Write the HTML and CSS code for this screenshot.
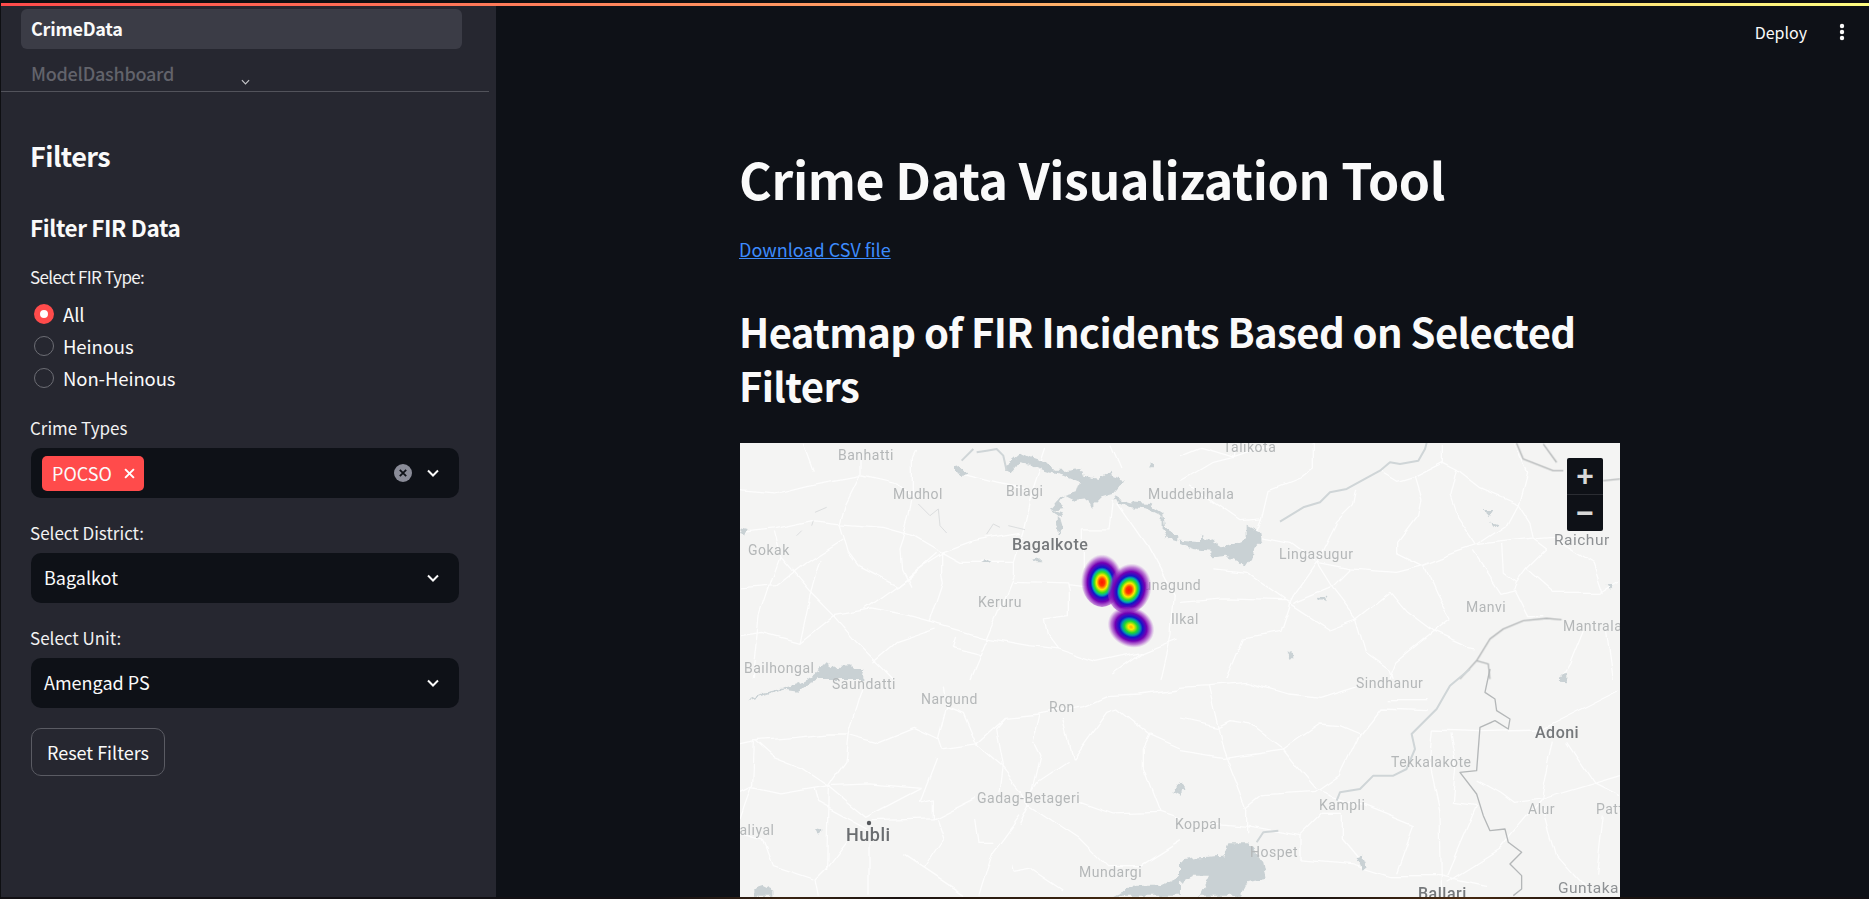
FILE: index.html
```html
<!DOCTYPE html>
<html lang="en">
<head>
<meta charset="utf-8">
<title>Crime Data Visualization Tool</title>
<link rel="stylesheet" href="styles.css">
</head>
<body>
<div class="frame">
  <div class="topbar"></div>
  <div class="app">
    <aside class="sidebar">
      <nav class="nav">
        <a class="nav-item active">CrimeData</a>
        <a class="nav-item faded">ModelDashboard</a>
        <svg class="nav-more" viewBox="0 0 10 6"><path d="M1 1l4 4 4-4"/></svg>
      </nav>
      <div class="side-body">
        <h2 class="side-title">Filters</h2>
        <h3 class="side-sub">Filter FIR Data</h3>
        <div class="field-label radio-label">Select FIR Type:</div>
        <div class="radios">
          <div class="radio on"><span class="dot"></span>All</div>
          <div class="radio"><span class="dot"></span>Heinous</div>
          <div class="radio"><span class="dot"></span>Non-Heinous</div>
        </div>
        <div class="field-label">Crime Types</div>
        <div class="select">
          <span class="tag">POCSO<svg class="tag-x" viewBox="0 0 10 10"><path d="M1 1l8 8M9 1l-8 8"/></svg></span>
          <svg class="clear" viewBox="0 0 18 18"><circle cx="9" cy="9" r="9"/><path d="M5.8 5.8l6.4 6.4M12.2 5.8l-6.4 6.4"/></svg>
          <svg class="chev" viewBox="0 0 12 8"><path d="M1 1.500l5 5 5-5"/></svg>
        </div>
        <div class="field-label">Select District:</div>
        <div class="select"><span class="value">Bagalkot</span><svg class="chev" viewBox="0 0 12 8"><path d="M1 1.500l5 5 5-5"/></svg></div>
        <div class="field-label">Select Unit:</div>
        <div class="select"><span class="value">Amengad PS</span><svg class="chev" viewBox="0 0 12 8"><path d="M1 1.500l5 5 5-5"/></svg></div>
        <button class="reset">Reset Filters</button>
      </div>
    </aside>
    <main class="main">
      <header class="header">
        <span class="deploy">Deploy</span>
        <svg class="kebab" viewBox="0 0 6 18"><circle cx="3" cy="3" r="2.200"/><circle cx="3" cy="9" r="2.200"/><circle cx="3" cy="15" r="2.200"/></svg>
      </header>
      <div class="content">
        <h1 class="title">Crime Data Visualization Tool</h1>
        <a class="link">Download CSV file</a>
        <h2 class="heading">Heatmap of FIR Incidents Based on Selected Filters</h2>
        <div class="map">
          <svg class="map-svg" viewBox="740 444 880 455" preserveAspectRatio="none">
            <defs>
              <filter id="soft" x="-5%" y="-5%" width="110%" height="110%"><feGaussianBlur stdDeviation="1.800"/></filter>
              <filter id="wobble" filterUnits="userSpaceOnUse" x="740" y="444" width="880" height="455">
                <feTurbulence type="fractalNoise" baseFrequency=".028" numOctaves="2" seed="4"/>
                <feDisplacementMap in="SourceGraphic" scale="9" xChannelSelector="R" yChannelSelector="G"/>
              </filter>
              <filter id="jag" filterUnits="userSpaceOnUse" x="740" y="444" width="880" height="455">
                <feTurbulence type="fractalNoise" baseFrequency=".14" numOctaves="2" seed="7"/>
                <feDisplacementMap in="SourceGraphic" scale="7" xChannelSelector="R" yChannelSelector="G"/>
              </filter>
              <radialGradient id="hotA" cx=".5" cy=".56" r=".5">
                <stop offset="0" stop-color="#ff1500"/><stop offset=".13" stop-color="#ff3a00"/><stop offset=".26" stop-color="#ffe800"/><stop offset=".37" stop-color="#36e020"/><stop offset=".46" stop-color="#00a8b0"/><stop offset=".54" stop-color="#1414c8"/><stop offset=".7" stop-color="#7400b4"/><stop offset=".86" stop-color="#9a30c0" stop-opacity=".6"/><stop offset="1" stop-color="#b060d0" stop-opacity="0"/>
              </radialGradient>
              <radialGradient id="hotB" cx=".5" cy=".5" r=".5">
                <stop offset="0" stop-color="#ffb000"/><stop offset=".12" stop-color="#ffe800"/><stop offset=".28" stop-color="#20d830"/><stop offset=".4" stop-color="#0090b0"/><stop offset=".5" stop-color="#1414c8"/><stop offset=".68" stop-color="#7400b4"/><stop offset=".85" stop-color="#9a30c0" stop-opacity=".6"/><stop offset="1" stop-color="#b060d0" stop-opacity="0"/>
              </radialGradient>
            </defs>
            <g filter="url(#wobble)">
            <g class="roads" transform="translate(730,430) scale(.3333)">
              <path d="M30 185L130 195 230 170 390 140 500 165 550 205M390 70L390 140 345 230 330 285 355 370 385 410"/>
              <path d="M30 310L130 300 250 275 330 285 460 295 550 320 635 370M550 80L550 205 540 260 520 330 510 360 515 420 540 470"/>
              <path d="M635 370L635 430 640 460 600 580M635 370L730 335 780 325 870 310M635 370L690 400 850 400 880 300 900 210 950 60M850 400L850 440 800 560 720 750"/>
              <path d="M30 480L140 470 230 400 340 330M150 385L240 490 310 560 380 640 440 700 490 750M130 310L150 385 130 440 90 560 70 750"/>
              <path d="M310 560L420 540 530 560 640 590 760 625 900 650 980 660 1100 700 1240 670 1340 630M30 620L100 610 210 640 310 560M385 410L500 470 560 420 640 370M210 640L240 500 270 390"/>
              <path d="M850 460L1010 465 1015 490 1015 560 940 570 950 620 980 660M1010 470L1130 485M1140 50L1170 120M1150 210L1140 300 1060 300 1060 420M1160 220L1250 350 1330 500 1320 620 1290 750"/>
              <path d="M680 630L670 660 750 680M220 45L250 125M700 140L820 170 900 185M1240 670L1150 735M430 700L500 640 620 600M560 60L550 80M620 370L540 440 400 540"/>
            </g>
            <g class="roads" transform="translate(1180,430) scale(.3333)">
              <path d="M0 160L100 100 160 85 165 45M160 85L60 55 0 80M160 85L265 50M400 42L400 120 360 150 270 185 250 270 180 275 100 220 30 170"/>
              <path d="M250 270L230 320 330 340 410 400 510 420 650 430 730 410 830 370 890 350 1060 330 1120 325M530 180L520 230 470 280 410 400 340 500 330 520 300 610 190 630 140 750"/>
              <path d="M410 400L460 480 530 570 560 670 630 720 640 750M0 520L130 510 320 515 450 600 530 570 630 490 680 550 760 610 860 655 890 660M510 420L460 470 340 520M100 420L200 430 320 515"/>
              <path d="M790 42L790 100 830 120 900 175 1015 225 1040 130 1000 42M790 100L700 145 650 160 600 130M700 145L720 210 710 260 650 340 650 370 730 410M830 120L810 200 830 260 890 350M1015 225L980 290 890 350"/>
              <path d="M1015 225L1050 280 1060 330 1100 360 1040 420 1010 460 1000 480 960 490 880 370M965 350L970 430 1010 460M1040 420L1120 490 1260 490 1320 450M730 410L770 500 810 570 760 610 650 700 630 750M1000 480L1040 560 1090 560M1210 600L1170 700 1140 750M1280 610L1300 750M1130 330L1240 400 1270 490"/>
            </g>
            <g class="roads" transform="translate(730,670) scale(.3333)">
              <path d="M30 225L75 215 200 205 290 195 350 195 440 220 550 175 625 210 635 240 740 225 830 145 930 135 1060 110 1130 80 1230 75 1350 60M75 215L130 265 220 300 295 350"/>
              <path d="M30 370L60 355 150 375 295 350 420 345 575 358M295 350L345 280 355 190 395 60M295 350L290 600M295 350L410 445 575 358M250 360L260 400 410 480"/>
              <path d="M425 455L610 450 740 385M420 520L420 680M350 515L285 600 255 630 265 680M625 210L650 110 640 50M740 225L700 130 650 110M740 225L820 295 880 370 900 410 870 470M830 145L800 180 820 290 810 370"/>
              <path d="M1010 280L920 340 900 370M930 135L910 220 930 260 905 365M1000 150L1030 270 1130 130 1160 120 1260 200 1350 240M1260 200L1240 240 1240 300 1290 430 1350 450M900 410L1050 510 1130 590 1230 590 1350 515M870 440L790 550 750 680"/>
              <path d="M1050 400L1150 435 1290 430M570 400L620 270M610 450L610 390 570 400M740 450L750 520 790 520M520 560L580 600 640 510 620 450M520 560L700 680M845 590L850 610 910 600 1000 660M250 630L130 590 100 510 30 490M70 215L65 350 30 450"/>
            </g>
            <g class="roads" transform="translate(1180,670) scale(.3333)">
              <path d="M0 55L85 50 200 40 320 75 420 85 530 50M85 50L130 240 200 420 200 490M0 150L110 175 150 155 210 165 310 240 420 165 480 170 540 195 600 120 740 125"/>
              <path d="M0 245L130 265 310 240 350 290 410 360 550 410 700 470 650 610M620 95L740 95M760 180L900 185 1080 180 1320 60M540 195L480 320 410 370 250 380 200 420"/>
              <path d="M200 470L360 500 430 430 490 430 490 510 540 570M360 570L520 585 630 620 780 620 920 650M760 180L750 290 780 430 785 680M810 190L830 300 820 400 890 410 800 620M1120 215L1085 390 1000 490 960 540 800 640"/>
              <path d="M1085 390L1320 320M1160 220L1240 340 1320 380M1090 420L1130 560 1210 650M890 330L960 370 1000 400 1085 390M1270 440L1250 620M210 470L100 460M360 500L360 570"/>
            </g>
            </g>
            <g filter="url(#jag)">
            <g class="water" transform="translate(730,430) scale(.3333)">
              <path d="M675 112L690 108 700 125 710 135 690 138 675 130ZM825 125L840 95 870 70 900 85 945 100 955 105 975 125 1020 125 1050 118 1060 140 1105 150 1120 140 1145 125 1150 145 1185 155 1150 195 1115 205 1085 235 1075 210 1035 215 1005 200 985 220 1000 240 965 245 990 265 1000 300 985 315 975 280 1000 255 960 240 990 205 1040 190 1050 160 1000 140 960 130 945 125 900 105 870 100 845 130Z"/>
              <path d="M1150 205L1200 220 1260 225 1300 250 1305 295 1345 325 1345 335 1310 325 1295 300 1295 260 1250 238 1200 235 1155 212ZM1262 100H1275V118H1262ZM758 395L770 388 785 398ZM908 392L925 388 938 400 920 400ZM30 298L50 303 42 320 35 310Z"/>
              <path d="M230 750L270 720 290 700 310 715 360 712 400 745 400 750Z"/>
            </g>
            <g class="water" transform="translate(1180,430) scale(.3333)">
              <path d="M0 335L60 340 60 320 100 335 130 355 165 345 200 330 200 290 240 310 245 335 220 360 215 385 195 415 175 395 140 380 100 385 90 365 40 360 0 345Z"/>
              <path d="M915 240H940L925 265ZM930 280L955 290 945 298ZM412 505L435 500 440 520ZM325 670L345 680 335 690ZM1280 465H1300L1290 480ZM1135 742H1165V750H1135Z"/>
            </g>
            <g class="water" transform="translate(730,670) scale(.3333)">
              <path d="M50 95L100 72 160 58 210 42 290 0 400 0 395 30 300 14 260 32 205 68 160 62 100 82ZM70 660L100 650 130 665 130 680H70ZM1150 680L1220 650 1290 650 1350 620V680ZM1350 335L1330 370 1350 380ZM255 480L275 485 265 500Z"/>
            </g>
            <g class="water" transform="translate(1180,670) scale(.3333)">
              <path d="M0 575L60 565 130 560 145 520 205 520 250 580 260 630 200 640 180 680 60 680 90 620 40 620 0 640ZM0 340L20 355 0 372ZM530 565L545 560 560 595 548 605ZM1140 20L1165 18 1160 40 1140 38Z"/>
            </g>
            </g>
            <g class="river" transform="translate(730,430) scale(.3333)">
              <path d="M695 95L730 60M740 70L770 65 800 60 820 80 830 125"/>
              <path class="thin" d="M565 225L600 260 625 240 630 290 650 312M770 315L790 285 810 295M835 290L885 302M200 320L215 305M245 290L250 275M255 250L290 235"/>
            </g>
            <g class="river" transform="translate(1180,430) scale(.3333)">
              <path d="M300 278L370 235 420 220 450 190 500 180 600 125 630 100 660 105 715 95 735 60 740 42"/>
            </g>
            <g class="border" transform="translate(1180,430) scale(.3333)">
              <path d="M1010 42L1030 90 1120 125 1150 125M1090 45L1130 100M1270 155L1320 150M1145 572L1100 568 1030 575 970 600 930 630 890 695 840 750M890 695L925 705 930 750"/>
            </g>
            <g class="river" transform="translate(1180,670) scale(.3333)">
              <path d="M870 0L810 50 770 120 695 195 705 240 680 300 640 320 580 320 540 360 480 370 470 395M230 520L250 490 295 485"/>
            </g>
            <g class="border" transform="translate(1180,670) scale(.3333)">
              <path d="M930 0L915 70 945 90 950 125 990 150 985 180 945 155 900 175 890 305 840 310 890 375 910 440 930 485 975 480 985 520 1025 550 990 585 1025 620 1025 660 1000 680"/>
            </g>

            <text class="lbl" x="838" y="461">Banhatti</text>
            <text class="lbl" x="893" y="500">Mudhol</text>
            <text class="lbl" x="1006" y="497">Bilagi</text>
            <text class="lbl" x="1148" y="500">Muddebihala</text>
            <text class="lbl" x="748" y="556">Gokak</text>
            <text class="lbl strong" x="1012" y="551">Bagalkote</text>
            <text class="lbl" x="978" y="608">Keruru</text>
            <text class="lbl" x="744" y="674">Bailhongal</text>
            <text class="lbl" x="1223" y="453">Talikota</text>
            <text class="lbl" x="1279" y="560">Lingasugur</text>
            <text class="lbl city" x="1554" y="546">Raichur</text>
            <text class="lbl" x="1466" y="613">Manvi</text>
            <text class="lbl" x="1563" y="632">Mantralayam</text>
            <text class="lbl" x="1171" y="625">Ilkal</text>
            <text class="lbl" x="1133" y="591">Hunagund</text>
            <text class="lbl" x="832" y="690">Saundatti</text>
            <text class="lbl" x="921" y="705">Nargund</text>
            <text class="lbl" x="1049" y="713">Ron</text>
            <text class="lbl" x="977" y="804">Gadag-Betageri</text>
            <circle class="pin" cx="869" cy="824" r="2.200"/>
            <text class="lbl big" x="846" y="842">Hubli</text>
            <text class="lbl" x="729" y="836">Haliyal</text>
            <text class="lbl" x="1079" y="878">Mundargi</text>
            <text class="lbl" x="1175" y="830">Koppal</text>
            <text class="lbl" x="1250" y="858">Hospet</text>
            <text class="lbl" x="1319" y="811">Kampli</text>
            <text class="lbl" x="1356" y="689">Sindhanur</text>
            <text class="lbl" x="1391" y="768">Tekkalakote</text>
            <text class="lbl strong" x="1535" y="739">Adoni</text>
            <text class="lbl" x="1528" y="815">Alur</text>
            <text class="lbl" x="1596" y="815">Pattikonda</text>
            <text class="lbl city" x="1558" y="894">Guntakal</text>
            <text class="lbl strong" x="1418" y="900">Ballari</text>

            <ellipse cx="1102" cy="580" rx="21" ry="28" fill="url(#hotA)"/>
            <ellipse cx="1130" cy="588" rx="22" ry="27" fill="url(#hotA)" transform="rotate(20 1130 588)"/>
            <ellipse cx="1131" cy="628" rx="24" ry="20" fill="url(#hotB)" transform="rotate(25 1131 628)"/>
          </svg>
          <div class="zoom">
            <span class="zbtn">+</span>
            <span class="zbtn minus">−</span>
          </div>
        </div>
      </div>
    </main>
  </div>
  <div class="bottomedge"></div>
</div>
</body>
</html>
```

FILE: styles.css
```css
* { box-sizing: border-box; }
html, body { margin: 0; height: 100%; overflow: hidden; }
body {
  font-family: "Noto Sans CJK SC", "Noto Sans", sans-serif;
  color: #fafafa;
  background: #0e0f12;
}
.frame {
  height: 899px;
  display: flex;
  flex-direction: column;
  padding: 3px 0 0 1px;
}
.topbar {
  height: 3px;
  flex: none;
  background: linear-gradient(90deg, #ff4b4b, #fffd80);
}
.app {
  flex: 1;
  min-height: 0;
  display: flex;
}
.bottomedge {
  height: 2px;
  flex: none;
  background: linear-gradient(90deg, #121014 0, #121014 35%, #3a2412 42%, #1a1310 48%, #43280f 60%, #1a1310 70%, #4a2a10 78%, #1a1310 86%, #121014 100%);
}

/* Sidebar */
.sidebar {
  width: 495px;
  flex: none;
  background: #262730;
  display: flex;
  flex-direction: column;
}
.nav {
  position: relative;
  height: 86px;
  flex: none;
  margin-right: 7px;
  padding: 3px 27px 0 20px;
  border-bottom: 1px solid #52535b;
  overflow: hidden;
}
.nav-item {
  display: block;
  height: 40px;
  padding-left: 10px;
  font-size: 18px;
  line-height: 38px;
  font-weight: 600;
  letter-spacing: -.25px;
  border-radius: 6px;
}
.nav-item.active { background: #3b3c46; }
.nav-item.faded {
  margin-top: 5px;
  font-weight: 500;
  color: #62636b;
}
.nav-more {
  position: absolute;
  left: 240px;
  top: 73px;
  width: 9px;
  height: 6px;
  fill: none;
  stroke: #c6c7ca;
  stroke-width: 1.300;
}
.side-body {
  padding: 0 37px 0 30px;
}
.side-title {
  margin: 44px 0 0 -1px;
  font-size: 27px;
  line-height: 40px;
  font-weight: 600;
  letter-spacing: -.55px;
}
.side-sub {
  margin: 35px 0 0 -1px;
  font-size: 22.500px;
  line-height: 32px;
  font-weight: 600;
  letter-spacing: -.4px;
}
.field-label {
  font-size: 17px;
  line-height: 22px;
  margin: 24px 0 0 -1px;
  height: 22px;
  color: #f2f2f2;
}
.radio-label {
  margin-top: 23px;
  letter-spacing: -.65px;
}
.radios {
  margin-top: 10px;
  margin-bottom: -1px;
}
.radio {
  display: flex;
  align-items: center;
  height: 32px;
  padding-left: 3px;
  gap: 9px;
  font-size: 18.500px;
  letter-spacing: -.1px;
}
.dot {
  width: 20px;
  height: 20px;
  border-radius: 50%;
  border: 1.500px solid #6c6d74;
  background: transparent;
  flex: none;
}
.radio.on .dot {
  border: 6px solid #ff4b4b;
  background: #fff;
}
.select {
  display: flex;
  align-items: center;
  height: 50px;
  margin-top: 9px;
  padding: 0 20px 0 11px;
  background: #0e1117;
  border-radius: 10px;
  font-size: 18px;
}
.value {
  flex: 1;
  padding: 0 0 2px 2px;
}
.tag {
  display: flex;
  align-items: center;
  height: 35px;
  width: 102px;
  padding-left: 10px;
  background: #ff4b4b;
  border-radius: 5px;
  font-size: 18px;
}
.tag-x {
  width: 11px;
  height: 11px;
  margin-left: 12px;
  fill: none;
  stroke: #fff;
  stroke-width: 1.800;
}
.clear {
  width: 18px;
  height: 18px;
  margin-left: auto;
}
.clear circle { fill: #8a8c98; }
.clear path { stroke: #0e1117; stroke-width: 1.800; }
.clear + .chev { margin-left: 15px; }
.chev {
  width: 12px;
  height: 8px;
  fill: none;
  stroke: #fafafa;
  stroke-width: 2;
}
.reset {
  display: block;
  width: 134px;
  height: 48px;
  margin-top: 20px;
  padding: 0;
  background: transparent;
  border: 1px solid #5a5b63;
  border-radius: 10px;
  color: #fafafa;
  font: inherit;
  font-size: 18px;
}

/* Main */
.main {
  flex: 1;
  min-width: 0;
  background: #0e1117;
  position: relative;
  overflow: hidden;
}
.header {
  position: absolute;
  top: 0;
  right: 0;
  display: flex;
  align-items: center;
  height: 52px;
  padding-right: 24px;
}
.deploy {
  font-size: 16px;
  line-height: 48px;
}
.kebab {
  width: 6px;
  height: 18px;
  margin-left: 32px;
  fill: #fafafa;
}
.content {
  width: 880px;
  margin-left: 244px;
  display: flex;
  flex-direction: column;
  height: 100%;
}
.title {
  margin: 142px 0 0 -1px;
  font-size: 50px;
  line-height: 60px;
  font-weight: 700;
  letter-spacing: -.35px;
  flex: none;
}
.link {
  flex: none;
  margin: 27px 0 0 -1px;
  font-size: 18px;
  line-height: 28px;
  color: #3d8bfd;
  text-decoration: underline;
  align-self: flex-start;
}
.heading {
  flex: none;
  margin: 41px 0 0 -1px;
  font-size: 40px;
  line-height: 54px;
  font-weight: 600;
  letter-spacing: -.6px;
}
.map {
  position: relative;
  flex: 1;
  min-height: 0;
  margin-top: 31px;
  background: #f4f4f3;
  overflow: hidden;
}
.map-svg {
  display: block;
  width: 880px;
  height: 455px;
}
.roads path {
  fill: none;
  stroke: #fdfdfd;
  stroke-width: 3.800;
  stroke-linejoin: round;
}
.water path { fill: #c9d1d4; stroke: none; }
.river path {
  fill: none;
  stroke: #cfd5d7;
  stroke-width: 6;
  stroke-linejoin: round;
}
.river path.thin { stroke-width: 2.500; stroke: #d6d9da; }
.border path {
  fill: none;
  stroke: #b4b7b8;
  stroke-width: 4;
  stroke-linejoin: round;
  filter: url(#soft);
}
.lbl {
  font-family: Roboto, "Liberation Sans", sans-serif;
  font-size: 14px;
  letter-spacing: .5px;
  fill: #b4b7b8;
}
.lbl.strong { fill: #75787b; font-size: 16px; font-weight: 500; }
.lbl.city { fill: #8e9194; font-size: 15.500px; }
.lbl.big { fill: #6a6d70; font-size: 18px; font-weight: 500; }
.pin { fill: #55585c; }
.zoom {
  position: absolute;
  top: 15px;
  right: 17px;
  width: 36px;
  height: 73px;
  background: #0e1117;
  display: flex;
  flex-direction: column;
  border-radius: 2px;
}
.zbtn {
  flex: 1;
  display: flex;
  align-items: center;
  justify-content: center;
  font-family: "Liberation Sans", sans-serif;
  font-size: 30px;
  font-weight: 700;
  color: #d8d8d8;
}
.zbtn.minus { border-top: 1px solid #2b2d33; }
```
